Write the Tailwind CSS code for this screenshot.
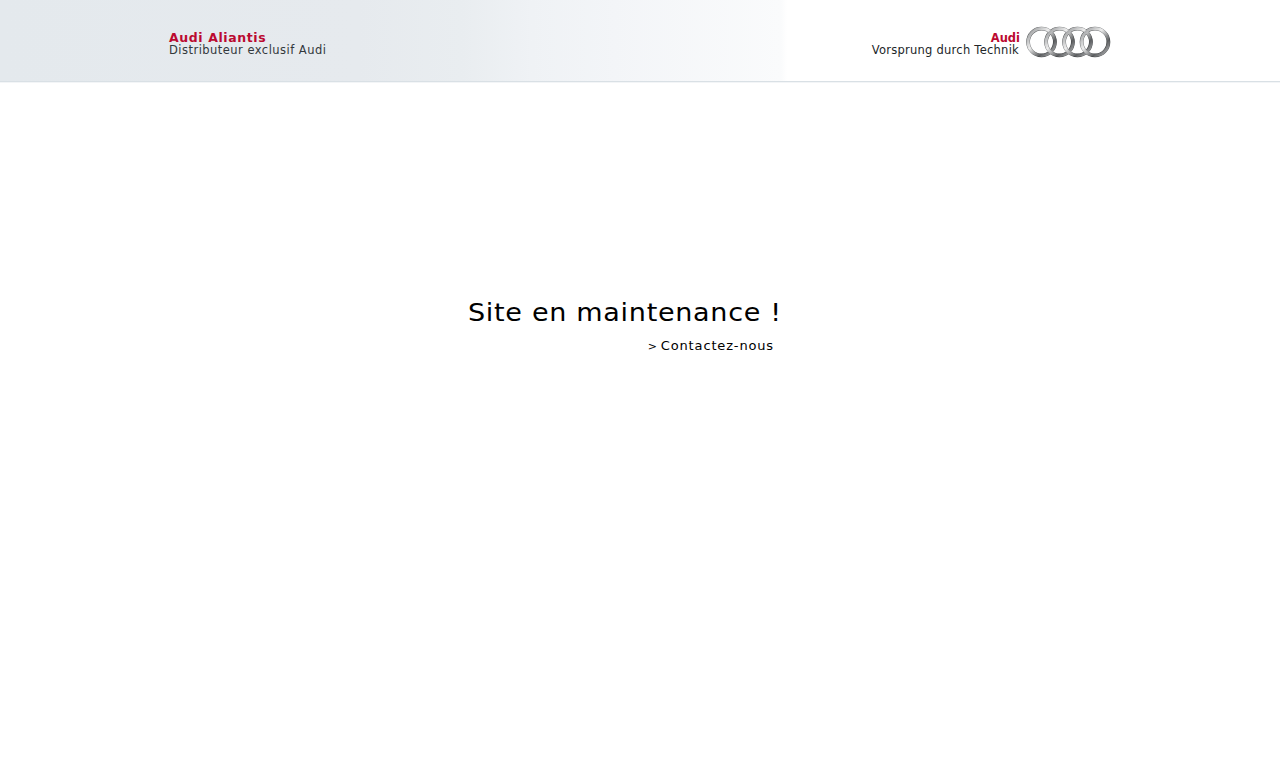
<!DOCTYPE html>
<html lang="fr">
<head>
    <meta charset="UTF-8">
    <title>Audi Aliantis</title>
    <script src="https://cdn.jsdelivr.net/npm/@tailwindcss/browser@4"></script>
</head>
<body class="bg-white font-['DejaVu_Sans',sans-serif] overflow-hidden h-[774px]">
    <header class="h-[82px] border-b border-[#d9e0e5] shadow-[0_1px_0_#f3f5f7] bg-[linear-gradient(90deg,#e4e9ed_0%,#e6eaee_28%,#e9edf0_36%,#eff2f5_41.5%,#f3f5f8_48%,#fafbfc_61%,#ffffff_61.5%)] flex justify-between items-start pl-[169px] pr-[169px]">
        <div class="pt-[31px]">
            <div class="text-[12.5px] leading-[13px] font-bold text-[#bb0a30] tracking-[0.6px]">Audi Aliantis</div>
            <div class="text-[11.5px] leading-[12px] text-[#33383c] tracking-[0.47px]">Distributeur exclusif Audi</div>
        </div>
        <div class="flex items-start gap-[6px] pt-[26px]">
            <div class="text-right pt-[6px]">
                <div class="text-[11.5px] leading-[12px] font-bold text-[#bb0a30]">Audi</div>
                <div class="text-[11.5px] leading-[12px] text-[#222629] tracking-[0.25px] pr-px">Vorsprung durch Technik</div>
            </div>
            <svg width="85" height="32" viewBox="0 0 85 32" fill="none">
                <defs>
                    <linearGradient id="edge" x1="0" y1="0" x2="1" y2="1">
                        <stop offset="0" stop-color="#2e3032"/>
                        <stop offset="0.45" stop-color="#8b8d8f"/>
                        <stop offset="0.75" stop-color="#2e3032"/>
                        <stop offset="1" stop-color="#77797b"/>
                    </linearGradient>
                    <linearGradient id="ring" x1="0" y1="0" x2="1" y2="1">
                        <stop offset="0" stop-color="#8f9193"/>
                        <stop offset="0.4" stop-color="#eeeeee"/>
                        <stop offset="0.72" stop-color="#5c5e60"/>
                        <stop offset="1" stop-color="#bcbdbe"/>
                    </linearGradient>
                </defs>
                <g stroke="url(#edge)" stroke-width="3.8">
                    <circle cx="15.5" cy="16" r="13.4"/>
                    <circle cx="33.5" cy="16" r="13.4"/>
                    <circle cx="51.5" cy="16" r="13.4"/>
                    <circle cx="69" cy="16" r="13.4"/>
                </g>
                <g stroke="url(#ring)" stroke-width="3">
                    <circle cx="15.5" cy="16" r="13.4"/>
                    <circle cx="33.5" cy="16" r="13.4"/>
                    <circle cx="51.5" cy="16" r="13.4"/>
                    <circle cx="69" cy="16" r="13.4"/>
                </g>
            </svg>
        </div>
    </header>
    <main class="pt-[212px] pl-[468px]">
        <div class="w-[313px]">
            <h1 class="text-[25.5px] leading-[36px] text-black tracking-[0.65px] whitespace-nowrap origin-left scale-x-[1.06]">Site en maintenance !</h1>
            <p class="mt-[7px] pr-[7px] text-right text-[13px] leading-[18px] text-black tracking-[0.85px] [word-spacing:-2px]"><a href="#"><span class="text-[11px]">&gt;</span> Contactez-nous</a></p>
        </div>
    </main>
</body>
</html>
